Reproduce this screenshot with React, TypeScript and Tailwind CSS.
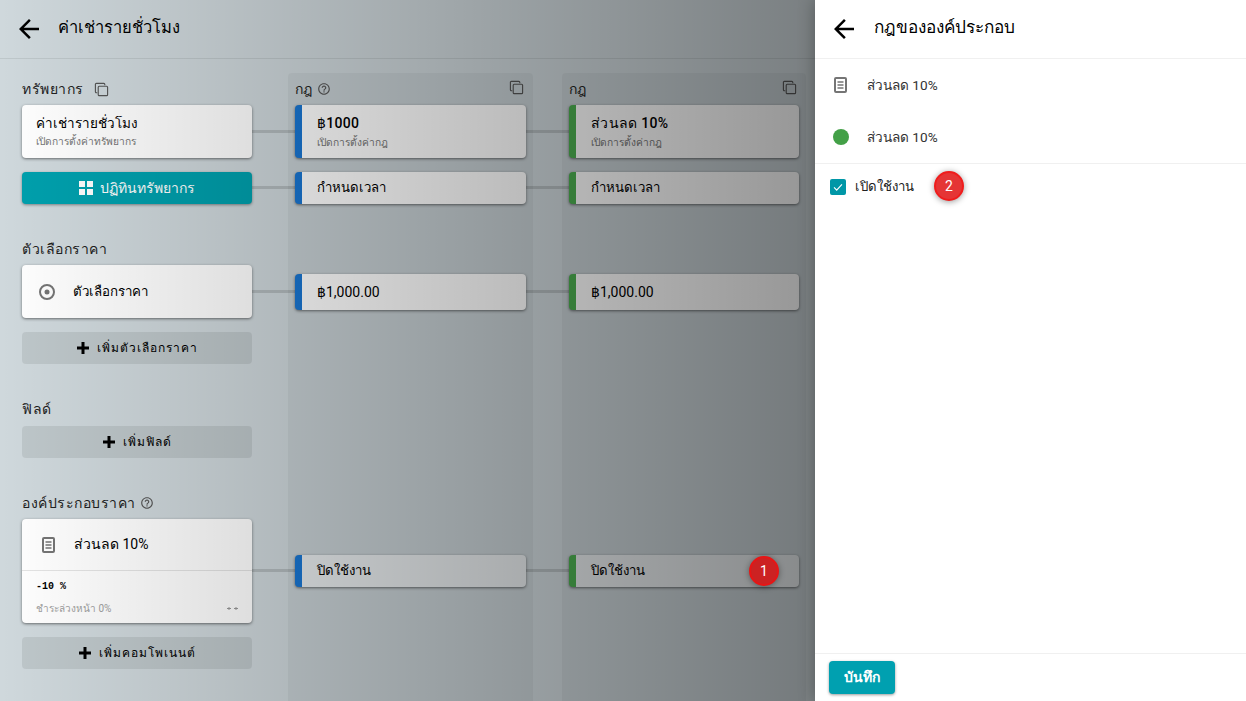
import React from 'react'

const font = 'font-["Roboto","Noto_Sans","Noto_Sans_CJK_SC",sans-serif]'

const BackIcon = () => (
  <svg viewBox="0 0 24 24" className="w-[30px] h-[30px] fill-black">
    <path d="M20 11H7.83l5.59-5.59L12 4l-8 8 8 8 1.41-1.41L7.83 13H20v-2z" />
  </svg>
)

const CopyIcon = () => (
  <svg viewBox="0 0 16 16" className="w-[15px] h-[15px] fill-none stroke-[#555] stroke-[1.2]">
    <path d="M3.5 11.5h-1a1 1 0 0 1-1-1v-8a1 1 0 0 1 1-1h8a1 1 0 0 1 1 1v1" />
    <rect x="4.5" y="4.5" width="10" height="10" rx="1" />
  </svg>
)

const HelpIcon = () => (
  <svg viewBox="0 0 24 24" className="w-[14px] h-[14px] fill-[#555]">
    <path d="M11 18h2v-2h-2v2zm1-16C6.48 2 2 6.48 2 12s4.48 10 10 10 10-4.48 10-10S17.52 2 12 2zm0 18c-4.41 0-8-3.59-8-8s3.59-8 8-8 8 3.59 8 8-3.59 8-8 8zm0-14c-2.21 0-4 1.79-4 4h2c0-1.1.9-2 2-2s2 .9 2 2c0 2-3 1.75-3 5h2c0-2.25 3-2.5 3-5 0-2.21-1.79-4-4-4z" />
  </svg>
)

const DocIcon = () => (
  <svg viewBox="0 0 13 16" className="w-[13px] h-[16px] fill-none stroke-[#757575]">
    <rect x="1" y="1" width="11" height="14" rx="1" strokeWidth="2" />
    <path d="M3.500 5h6M3.500 8h6M3.500 11h6" strokeWidth="1.5" />
  </svg>
)

const PlusIcon = () => (
  <svg viewBox="0 0 12 12" className="w-[12px] h-[12px] fill-black">
    <path d="M4.5 0h3v4.5H12v3H7.500V12h-3V7.500H0v-3h4.500z" />
  </svg>
)

const Connector = () => (
  <div className="absolute right-[calc(100%+7px)] top-1/2 -mt-[2px] h-[3px] w-[43px] bg-[#00000022]" />
)

const Label = ({ children }: { children: React.ReactNode }) => (
  <div className="flex items-center gap-[10px] h-[20px] text-[14px] font-medium tracking-[0.5px] text-[#212121]">{children}</div>
)

const AddButton = ({ text, className }: { text: string; className: string }) => (
  <button className={`flex items-center justify-center gap-[8px] w-full h-[32px] rounded-[4px] bg-[#00000014] text-[12px] font-medium tracking-[1px] text-black ${className}`}>
    <PlusIcon />
    {text}
  </button>
)

const Badge = ({ n, className }: { n: number; className: string }) => (
  <div className={`absolute z-10 flex items-center justify-center w-[30px] h-[30px] rounded-full border-[2px] text-white text-[14px] shadow-[0_1px_6px_rgba(0,0,0,0.4)] ${className}`}>
    {n}
  </div>
)

const RuleCard = ({ color, title, sub, h, mt, bg = 'bg-white', titleClass, children }: any) => (
  <div
    className={`relative flex flex-col justify-center w-full rounded-[4px] border-l-[7px] pl-[15px] shadow-[0_1px_3px_rgba(0,0,0,0.5)] ${bg} ${color} ${h} ${mt}`}
  >
    <Connector />
    <div className={`text-black ${titleClass}`}>{title}</div>
    {sub && <div className="mt-[1px] text-[10.2px] text-[#757575]">{sub}</div>}
    {children}
  </div>
)

const RuleColumn = ({ color, width, help, discount, badge }: any) => (
  <div className={`flex flex-col px-[7px] rounded-t-[4px] bg-[#0000000a] ${width}`}>
    <div className="flex items-center justify-between h-[32px] pr-[2px]">
      <div className="flex items-center gap-[5px] text-[14px] text-[#212121]">
        กฎ
        {help && <HelpIcon />}
      </div>
      <div className="-mt-[3px]">
        <CopyIcon />
      </div>
    </div>
    <RuleCard color={color} title={discount} sub="เปิดการตั้งค่ากฎ" h="h-[53px]" titleClass="text-[14px] font-medium tracking-[0.3px]" />
    <RuleCard color={color} title="กำหนดเวลา" h="h-[32px]" mt="mt-[14px]" titleClass="text-[13.2px]" />
    <RuleCard color={color} title="฿1,000.00" h="h-[36px]" mt="mt-[70px]" titleClass="text-[14px]" />
    <RuleCard color={color} title="ปิดใช้งาน" h="h-[32px]" mt="mt-[245px]" bg="bg-[#e6eaec]" titleClass="text-[13.2px]">
      {badge && <Badge n={1} className="left-[173px] top-[1px] bg-[#cc2222] border-[#e81515]" />}
    </RuleCard>
  </div>
)

const App = () => {
  return (
    <div className={`relative flex w-[1246px] h-[701px] overflow-hidden bg-[#cfd8dc] ${font}`}>
      <div className="flex flex-col w-[815px]">
        <div className="flex items-center gap-[14px] h-[59px] pl-[14px] border-b border-[#00000014]">
          <BackIcon />
          <div className="-mt-[2px] text-[16.5px] font-medium text-black">ค่าเช่ารายชั่วโมง</div>
        </div>
        <div className="flex flex-1 pl-[22px]">
          <div className="flex flex-col w-[230px] pt-[20px]">
            <Label>
              ทรัพยากร
              <CopyIcon />
            </Label>
            <div className="flex flex-col justify-center h-[53px] mt-[6px] pl-[14px] rounded-[4px] bg-white shadow-[0_1px_3px_rgba(0,0,0,0.5)]">
              <div className="text-[13.5px] font-medium text-black">ค่าเช่ารายชั่วโมง</div>
              <div className="mt-[1px] text-[10.2px] text-[#757575]">เปิดการตั้งค่าทรัพยากร</div>
            </div>
            <button className="flex items-center justify-center gap-[7px] h-[32px] mt-[14px] rounded-[4px] bg-[#00a0ad] text-[14px] font-medium text-white shadow-[0_1px_3px_rgba(0,0,0,0.4)]">
              <svg viewBox="0 0 14 14" className="w-[14px] h-[14px] fill-white">
                <rect width="6" height="6" />
                <rect x="8" width="6" height="6" />
                <rect y="8" width="6" height="6" />
                <rect x="8" y="8" width="6" height="6" />
              </svg>
              ปฏิทินทรัพยากร
            </button>
            <div className="mt-[35px]">
              <Label>ตัวเลือกราคา</Label>
            </div>
            <div className="flex items-center h-[53px] mt-[6px] pl-[17px] rounded-[4px] bg-white shadow-[0_1px_3px_rgba(0,0,0,0.5)]">
              <svg viewBox="0 0 16 16" className="w-[16px] h-[16px] fill-none stroke-[#757575]">
                <circle cx="8" cy="8" r="7" strokeWidth="2" />
                <circle cx="8" cy="8" r="2.500" className="fill-[#757575]" strokeWidth="0" />
              </svg>
              <div className="ml-[18px] text-[13.3px] text-black">ตัวเลือกราคา</div>
            </div>
            <AddButton text="เพิ่มตัวเลือกราคา" className="mt-[14px]" />
            <div className="mt-[35px]">
              <Label>ฟิลด์</Label>
            </div>
            <AddButton text="เพิ่มฟิลด์" className="mt-[7px]" />
            <div className="mt-[35px]">
              <Label>
                <span className="flex items-center gap-[4px]">
                  องค์ประกอบราคา
                  <HelpIcon />
                </span>
              </Label>
            </div>
            <div className="relative flex flex-col h-[104px] mt-[6px] rounded-[4px] bg-white shadow-[0_1px_3px_rgba(0,0,0,0.5)]">
              <div className="flex items-center h-[52px] pl-[20px] border-b border-[#e4e4e4]">
                <DocIcon />
                <div className="ml-[19px] text-[14px] text-black">ส่วนลด 10%</div>
              </div>
              <div className="flex flex-col flex-1 px-[14px] pt-[8px]">
                <div className="font-['Liberation_Mono',monospace] text-[10px] font-bold text-black">-10 %</div>
                <div className="flex items-center justify-between mt-[7px] text-[10px] text-[#9e9e9e]">
                  <span>ชำระล่วงหน้า 0%</span>
                  <svg viewBox="0 0 11 5" className="w-[11px] h-[5px] fill-none stroke-[#999]">
                    <path d="M0 2.500h4M2 1v3M7 2.500h4M9 1v3" />
                  </svg>
                </div>
              </div>
            </div>
            <AddButton text="เพิ่มคอมโพเนนต์" className="mt-[14px]" />
          </div>
          <div className="flex gap-[29px] ml-[36px] mt-[14px]">
            <RuleColumn color="border-[#1976d2]" width="w-[245px]" help discount="฿1000" />
            <RuleColumn color="border-[#4caf50]" width="w-[244px]" discount="ส่วนลด 10%" badge />
          </div>
        </div>
      </div>
      <div className="absolute inset-y-0 left-0 w-[815px] bg-gradient-to-r from-[#00000000] to-[#00000069] pointer-events-none" />
      <div className="relative flex flex-col w-[431px] bg-white shadow-[0_0_16px_rgba(0,0,0,0.3)]">
        <div className="flex items-center gap-[15px] h-[59px] pl-[14px] border-b border-[#f0f0f0]">
          <BackIcon />
          <div className="-mt-[2px] text-[17.2px] font-medium text-black">กฎขององค์ประกอบ</div>
        </div>
        <div className="flex items-center h-[52px] pl-[19px]">
          <DocIcon />
          <div className="ml-[20px] text-[13.6px] text-[#333]">ส่วนลด 10%</div>
        </div>
        <div className="flex items-center h-[53px] pl-[18px] border-b border-[#f0f0f0]">
          <div className="w-[16px] h-[16px] rounded-full bg-[#43a047]" />
          <div className="ml-[18px] text-[13.6px] text-[#333]">ส่วนลด 10%</div>
        </div>
        <div className="relative flex flex-1 flex-col">
          <div className="flex items-center h-[46px] pl-[15px]">
            <div className="flex items-center justify-center w-[16px] h-[16px] rounded-[2px] bg-[#0097a7]">
              <svg viewBox="0 0 16 16" className="w-[14px] h-[14px] fill-none stroke-white stroke-[1.3]">
                <path d="M3.500 8.500l3 3 6-6.500" />
              </svg>
            </div>
            <div className="ml-[9px] text-[13.2px] text-[#212121]">เปิดใช้งาน</div>
            <Badge n={2} className="left-[119px] top-[7px] bg-[#e53535] border-[#f01c1c]" />
          </div>
        </div>
        <div className="flex items-center h-[48px] pl-[14px] border-t border-[#f0f0f0]">
          <button className="w-[66px] h-[33px] rounded-[4px] bg-[#00a0b0] text-[14px] font-bold text-white shadow-[0_1px_3px_rgba(0,0,0,0.4)]">บันทึก</button>
        </div>
      </div>
    </div>
  )
}

export default App
